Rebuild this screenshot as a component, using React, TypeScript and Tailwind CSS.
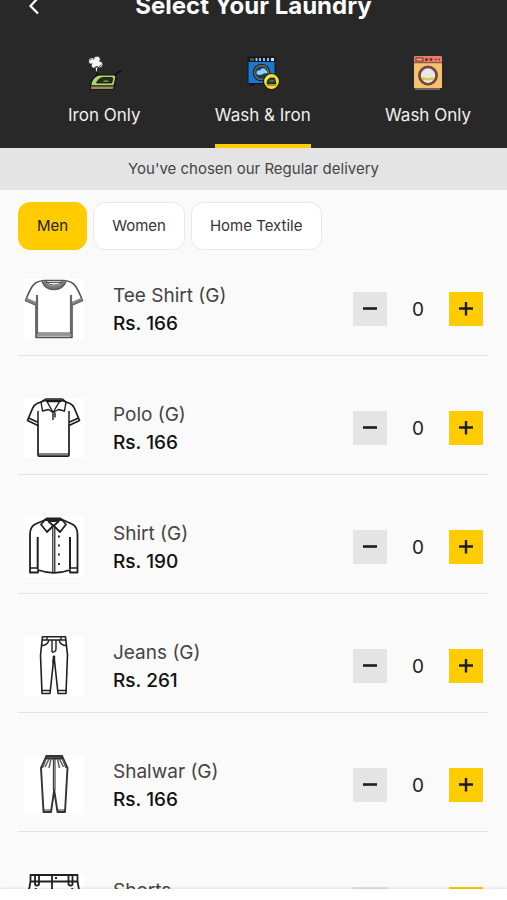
import { useState, type ReactNode } from "react";

type Service = {
  id: string;
  label: string;
  icon: ReactNode;
};

type Garment = {
  id: string;
  name: string;
  price: number;
  icon: ReactNode;
};

function IronIcon() {
  return (
    <svg viewBox="0 0 36 36" className="size-9" fill="none" aria-hidden="true">
      <g fill="#f4f4f4" stroke="#111" strokeWidth="0.8">
        <circle cx="6" cy="6" r="3.6" />
        <circle cx="11" cy="4.5" r="3.4" />
        <circle cx="13.5" cy="9.5" r="3.4" />
        <circle cx="8" cy="10.5" r="2.8" />
        <path d="M9 12h3l-.8 5h-1.4z" />
      </g>
      <circle cx="9.8" cy="7.6" r="3.6" fill="#f4f4f4" />
      <path d="M4 5.5c0-1.4 1.2-2 2.2-1.5M13 11.5c1.5.2 2.3-.9 2-2" stroke="#333" strokeWidth="0.9" />
      <path d="M28 21c2-.3 2-3.500 4.500-4l3-1.200" stroke="#0b0b0b" strokeWidth="1.6" />
      <path d="M4.500 31c.3-3.500 2.500-7.500 5-9.500 1.400-1.100 3-1.500 5-1.500h13c2 0 2.700 1 2.300 3L28 31z" fill="#a6d86b" stroke="#111" strokeWidth="1.200" />
      <path d="M10.500 28c1.500-3.200 3.500-5.500 7-5.500h8c1 0 1.300.4 1.100 1.300l-.8 4.200z" fill="#22301c" stroke="#111" strokeWidth="0.8" />
      <path d="M16.500 27l2-1.800h3l1.500 1.800z" fill="#8a7a43" />
      <path d="M4.500 31h24l-1.500 3.500H4.500z" fill="#a28a58" stroke="#111" strokeWidth="0.900" />
      <path d="M10 21l1-2.500 2 1.500" stroke="#111" strokeWidth="1.200" />
    </svg>
  );
}

function WashIronIcon() {
  return (
    <svg viewBox="0 0 36 36" className="size-9" fill="none" aria-hidden="true">
      <path d="M5 28h5v2.500H5zM22 28h5v2H22z" fill="#0b1622" />
      <rect x="3" y="2" width="27" height="26.500" rx="1" fill="#1d76d2" stroke="#0b1622" />
      <rect x="3" y="2" width="27" height="5" fill="#0e1a27" />
      <path d="M5 4.500h4" stroke="#77663a" strokeWidth="2" />
      <path d="M11.500 3v3M15 3v3M19 3v3M23 3v3" stroke="#a8cae0" strokeWidth="1.800" />
      <path d="M26 4.500h3" stroke="#c7e6fa" strokeWidth="3" />
      <circle cx="16.500" cy="17.500" r="8" fill="#153d61" stroke="#11202c" strokeWidth="1.500" />
      <circle cx="16.500" cy="17.500" r="7" stroke="#716f40" strokeWidth="1.400" />
      <path d="M11.500 18.500c0-3 1.500-4 3.500-3 1-3 5-3 6 0 2.500 1 1.500 3-.5 3-2-1-3 2-5 1-1.500 1-3 .5-4-1z" fill="#91cbff" />
      <circle cx="26.500" cy="26.500" r="8" fill="#f8df31" stroke="#17170e" strokeWidth="1.200" />
      <path d="M22 28.500c.4-3.500 1.400-5 3.500-5.500h4l1.500 5.500z" fill="#243834" stroke="#111" strokeWidth="0.8" />
      <path d="M24.500 26h5" stroke="#5b8f87" />
      <path d="M21.500 30h10" stroke="#6d6423" strokeWidth="1.200" />
    </svg>
  );
}

function WashIcon() {
  return (
    <svg viewBox="0 0 36 36" className="size-9" fill="none" aria-hidden="true">
      <path d="M5 33h25v2H5z" fill="#6a6464" />
      <path d="M4 2.500C4 1.500 4.500 1 5.500 1h25c1 0 1.500.5 1.500 1.500V8H4z" fill="#ea7c6c" />
      <rect x="4" y="7.500" width="28" height="25.500" fill="#fbc06e" />
      <path d="M4 7.700h28" stroke="#73423b" />
      <rect x="6" y="3" width="7" height="3" fill="#f0a898" stroke="#6d352f" />
      <circle cx="16.500" cy="4.500" r="1.500" fill="#6d352f" />
      <circle cx="21" cy="4.500" r="1.500" fill="#6d352f" />
      <path d="M25 4.500h1.500M28.500 4.500H30" stroke="#6d352f" strokeWidth="1.500" />
      <circle cx="18" cy="20.500" r="8.600" fill="#ece7e5" stroke="#6f4a42" strokeWidth="2.800" />
      <path d="M11.500 22.500c3-1.500 5 1 7.500.5s3.500-.5 5.500-.5c-.8 3.300-3.500 5-6.500 5s-5.800-1.700-6.500-5z" fill="#d6cb56" />
      <path d="M13 25c2.500-.3 3.500.8 6 .5s2.500-.5 4-.5c-1.200 1.800-3 2.600-5 2.600S14 26.700 13 25z" fill="#f1ecd2" />
    </svg>
  );
}

function TeeIcon() {
  return (
    <svg viewBox="0 0 60 60" className="size-[60px]" fill="none" stroke="#555" strokeWidth="1.600" strokeLinejoin="round" aria-hidden="true">
      <path d="M20 1.500h20c6 .5 9 2 11.500 5.500 3 4.500 5 9.500 7 14.500l-10.500 4.500v32.500H12V26L1.500 21.500c2-5 4-10 7-14.500C11 3.500 14 2 20 1.500z" fill="#fff" />
      <path d="M19.500 2.500c3.500 8.500 17.500 8.500 21 0" stroke="#777" strokeWidth="3.500" />
      <path d="M17.800 2c4 11.500 20.400 11.500 24.400 0M22 2c3 5.500 13 5.500 16 0M22 3.500h16" strokeWidth="1.100" />
      <path d="M2 20l10.500 4.500M58 20l-10.500 4.500" stroke="#888" strokeWidth="2.500" />
      <path d="M13 16v42M47 16v42" stroke="#666" strokeWidth="2.200" />
      <path d="M13 56h34" stroke="#999" strokeWidth="3" />
      <path d="M13 54h34" strokeWidth="1" />
    </svg>
  );
}

function PoloIcon() {
  return (
    <svg viewBox="0 0 60 60" className="size-[60px]" fill="none" stroke="#1c1c1c" strokeWidth="1.700" strokeLinejoin="round" aria-hidden="true">
      <path d="M21 2.500L13 5.500c-2.500 1-3.500 2.500-4.500 5L3.500 22.500l10.500 5V57c0 .8.400 1.200 1.200 1.200h28.600c.8 0 1.200-.4 1.200-1.200V27.500l10.500-5L50.500 10.500c-1-2.500-2-4-4.500-5l-8-3z" fill="#fff" />
      <path d="M21.500 1h17M22 3.500h15.500M21.500 1L17 4l1.500 9 6-1.500L29 14.500l5.500-3 6 1.500L42 4l-3.500-3M23 3.500l6 11 6.500-11M29 14.500v7.500M31 14.500v5" strokeWidth="1.400" />
      <path d="M14 13v15M45 13v15M4.500 20l10 4.500M54.500 20l-10 4.500" strokeWidth="1.500" />
      <path d="M14.500 56h30" strokeWidth="1.100" />
    </svg>
  );
}

function ShirtIcon() {
  return (
    <svg viewBox="0 0 60 60" className="size-[60px]" fill="none" stroke="#202020" strokeWidth="1.800" strokeLinejoin="round" aria-hidden="true">
      <path d="M21 3L11.500 7C7.500 9 6 12 6 17v38.500h8V53c10 3.500 22 3.500 32 0v2.500h7.500V17c0-5-1.500-8-5.500-10L39 3z" fill="#fff" />
      <path d="M22 1.500h15M24 4h11M22 1.500l-5 6 6 7.500 6.500-6.500 6.500 6.500 6-7.500-5-6M24 4l5.500 5L35 4" />
      <path d="M28.800 9.500v46M30.800 9.500v46" strokeWidth="1.200" />
      <path d="M13.700 20v32M46 20v32" strokeWidth="2" />
      <path d="M6 51h8M46 51h7.500" strokeWidth="1.500" />
      <path d="M34 19.500h1.800M34 28.500h1.800M34 37.500h1.800M34 47h1.800" />
    </svg>
  );
}

function JeansIcon() {
  return (
    <svg viewBox="0 0 60 60" className="size-[60px]" fill="none" stroke="#202020" strokeWidth="1.600" strokeLinejoin="round" aria-hidden="true">
      <path d="M18.500.8h23l2 18-1.500 38.700h-8L30 20l-4 37.500h-8L16.500 19z" fill="#fff" />
      <path d="M18 4h24M23 1v3M37 1v3M28 4v12M32 4v9c0 2-1.500 3-4 3.500" strokeWidth="1.400" />
      <path d="M17.500 9.500c4 0 6.500-1.500 7.500-5.500M42.500 9.500c-4 0-6.500-1.500-7.500-5.500" strokeWidth="1.400" />
      <path d="M17.500 54.500h9M33.500 54.500h9" strokeWidth="1.300" />
      <path d="M30 20l-.5 7" strokeWidth="2.500" />
    </svg>
  );
}

function ShalwarIcon() {
  return (
    <svg viewBox="0 0 60 60" className="size-[60px]" fill="none" stroke="#333" strokeWidth="1.900" strokeLinejoin="round" aria-hidden="true">
      <path d="M22.500 1h15.500l5.500 12-2.500 44h-7.500L30.200 35 27 57h-7.500L17 13z" fill="#fff" />
      <path d="M22.500 1h15.500v2.500H22.500z" fill="#666" />
      <path d="M29.400 4v31M31 4v31" strokeWidth="1.100" />
      <path d="M22 4l-3.500 9M25 4l-4 8M27 4l-2 9M38.500 4l3.500 9M35.500 4l4 8M33.500 4l2 9" stroke="#555" strokeWidth="1.400" />
      <path d="M19.500 55h7.500M33.500 55h7.500" strokeWidth="1.100" />
    </svg>
  );
}

function ShortsIcon() {
  return (
    <svg viewBox="0 0 60 60" className="size-[60px]" fill="none" stroke="#202020" strokeWidth="1.800" strokeLinejoin="round" aria-hidden="true">
      <path d="M6.500 1h47v6.500l4 21.500-4 17H33l-3-19-3 19H6.500l-4-17 4-21.500z" fill="#fff" />
      <path d="M6.500 7.500h47M28 1v25" />
      <path d="M11 1v9c0 2 4 2 4 0V1M44.500 1v9c0 2 4 2 4 0V1" />
      <path d="M31 4h2" />
      <path d="M12 14c-1 4-4 6-8 7M48 14c1 4 4 6 8 7" />
    </svg>
  );
}

const services: Service[] = [
  { id: "iron", label: "Iron Only", icon: <IronIcon /> },
  { id: "wash-iron", label: "Wash & Iron", icon: <WashIronIcon /> },
  { id: "wash", label: "Wash Only", icon: <WashIcon /> },
];

const categories = ["Men", "Women", "Home Textile"];

const garments: Garment[] = [
  { id: "tee", name: "Tee Shirt (G)", price: 166, icon: <TeeIcon /> },
  { id: "polo", name: "Polo (G)", price: 166, icon: <PoloIcon /> },
  { id: "shirt", name: "Shirt (G)", price: 190, icon: <ShirtIcon /> },
  { id: "jeans", name: "Jeans (G)", price: 261, icon: <JeansIcon /> },
  { id: "shalwar", name: "Shalwar (G)", price: 166, icon: <ShalwarIcon /> },
  { id: "shorts", name: "Shorts", price: 166, icon: <ShortsIcon /> },
];

type GarmentRowProps = {
  garment: Garment;
  count: number;
  onChange: (count: number) => void;
};

function GarmentRow({ garment, count, onChange }: GarmentRowProps) {
  return (
    <li className="flex items-center border-b border-[#e3e3e3] px-[6px] pb-4">
      <div className="shrink-0 bg-white">{garment.icon}</div>
      <div className="ml-[29px] min-w-0 flex-1 pt-0.5 text-[19px] leading-7">
        <h2 className="truncate text-[#444]">{garment.name}</h2>
        <p className="font-medium text-[#111]">Rs. {garment.price}</p>
      </div>
      <div className="flex items-center">
        <button
          type="button"
          aria-label={`Remove one ${garment.name}`}
          onClick={() => onChange(Math.max(0, count - 1))}
          className="flex size-[34px] items-center justify-center bg-[#e4e4e4]"
        >
          <svg viewBox="0 0 14 14" className="size-[14px]" stroke="#1c1c1c" strokeWidth="2.600" aria-hidden="true">
            <path d="M0 6.500h14" />
          </svg>
        </button>
        <span className="w-[62px] pt-0.5 text-center text-[19px] leading-7 text-[#222]">{count}</span>
        <button
          type="button"
          aria-label={`Add one ${garment.name}`}
          onClick={() => onChange(count + 1)}
          className="flex size-[34px] items-center justify-center bg-[#ffcc00]"
        >
          <svg viewBox="0 0 14 14" className="size-[14px]" stroke="#1c1c1c" strokeWidth="2.400" aria-hidden="true">
            <path d="M0 6.500h14M7 0v13.500" />
          </svg>
        </button>
      </div>
    </li>
  );
}

export default function App() {
  const [service, setService] = useState("wash-iron");
  const [category, setCategory] = useState("Men");
  const [counts, setCounts] = useState<Record<string, number>>({});

  return (
    <div className="flex h-screen flex-col overflow-hidden bg-[#fafafa] font-['Inter',sans-serif]">
      <header className="shrink-0 bg-[#282828] text-white">
        <div className="-mt-3 grid h-8 grid-cols-[1fr_auto_1fr] items-center px-6">
          <button type="button" aria-label="Back" className="justify-self-start">
            <svg viewBox="0 0 20 20" className="size-5" fill="none" stroke="currentColor" strokeWidth="2.200" aria-hidden="true">
              <path d="M14 3L6.500 11l7.500 7.500" />
            </svg>
          </button>
          <h1 className="pt-0.5 text-2xl font-bold">Select Your Laundry</h1>
        </div>
        <nav className="mt-[35px] flex justify-between pr-9 pl-[68px]">
          {services.map((item) => (
            <button
              key={item.id}
              type="button"
              onClick={() => setService(item.id)}
              className={`flex flex-col items-center border-b-4 whitespace-nowrap ${
                service === item.id ? "border-[#ffcc00]" : "border-transparent"
              }`}
            >
              {item.icon}
              <span className="mt-3 mb-[17px] text-[17px] leading-6 text-[#f0f0f0]">{item.label}</span>
            </button>
          ))}
        </nav>
      </header>

      <p className="shrink-0 bg-[#e4e4e4] py-[9px] text-center text-[15px] leading-6 text-[#444]">
        You've chosen our Regular delivery
      </p>

      <main className="min-h-0 flex-1 overflow-y-auto px-[18px] pt-3 [scrollbar-width:none]">
        <div className="flex gap-[6px]">
          {categories.map((item) => (
            <button
              key={item}
              type="button"
              onClick={() => setCategory(item)}
              className={`rounded-xl border px-[18px] py-[11px] text-[15px] leading-6 ${
                category === item
                  ? "border-[#ffcc00] bg-[#ffcc00] text-[#222]"
                  : "border-[#e8e8e8] bg-white text-[#333]"
              }`}
            >
              {item}
            </button>
          ))}
        </div>
        <ul className="mt-[29px] flex flex-col gap-[42px]">
          {garments.map((garment) => (
            <GarmentRow
              key={garment.id}
              garment={garment}
              count={counts[garment.id] ?? 0}
              onChange={(count) => setCounts({ ...counts, [garment.id]: count })}
            />
          ))}
        </ul>
      </main>

      <footer className="z-10 h-[11px] shrink-0 bg-white shadow-[0_-1px_3px_rgba(0,0,0,0.1)]" />
    </div>
  );
}
